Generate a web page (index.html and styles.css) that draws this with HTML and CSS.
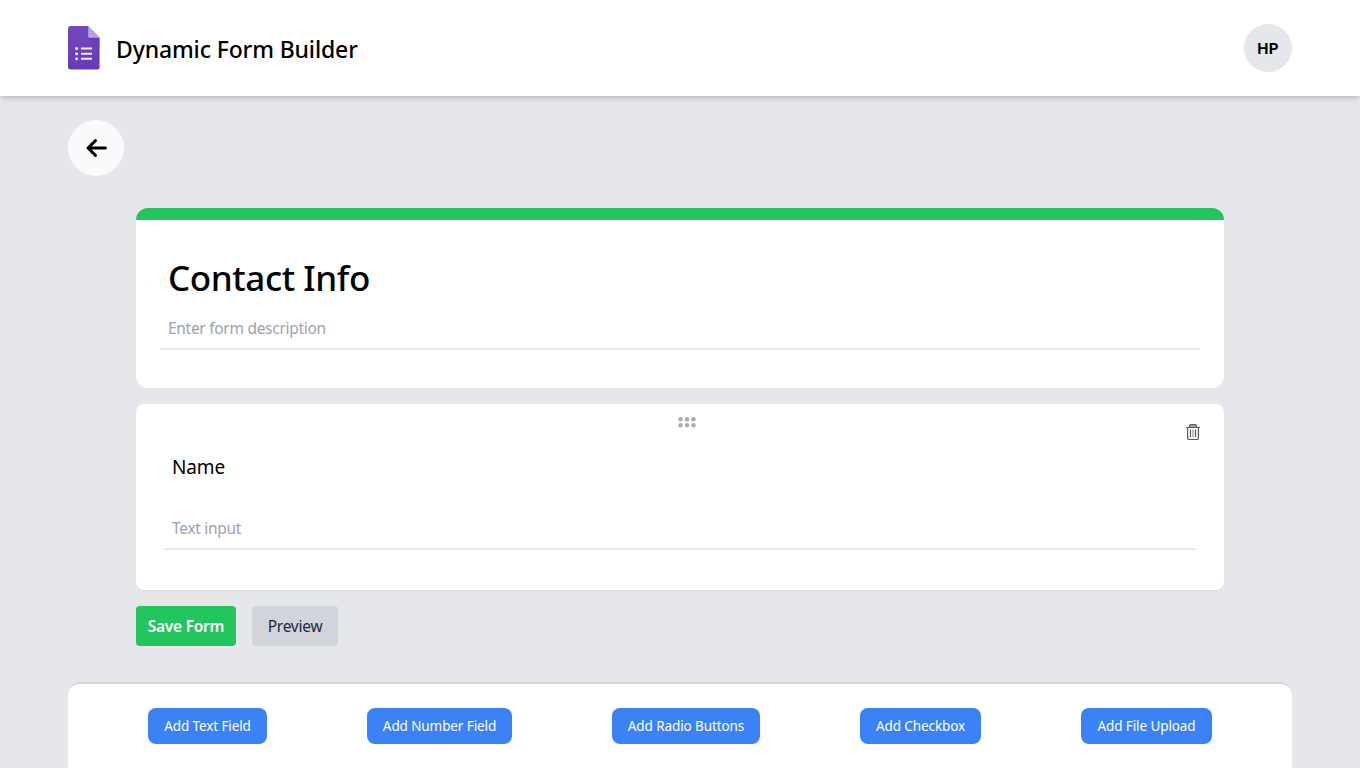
FILE: index.html
```html
<!DOCTYPE html>
<html lang="en">
<head>
<meta charset="utf-8">
<title>Dynamic Form Builder</title>
<link rel="stylesheet" href="styles.css">
</head>
<body>
<div class="page">
  <header class="header">
    <div class="brand">
      <svg class="logo" width="32" height="44" viewBox="0 0 32 44">
        <defs><linearGradient id="paper" x1="0" y1="0" x2="0" y2="1"><stop offset="0" stop-color="#7549bd"/><stop offset="1" stop-color="#673ab7"/></linearGradient></defs>
        <path fill="url(#paper)" d="M2.500 0H20.200L31.600 11.800V40.900a2.500 2.500 0 0 1-2.500 2.500H2.500a2.500 2.500 0 0 1-2.500-2.500V2.500a2.500 2.500 0 0 1 2.500-2.500z"/>
        <path fill="#5b34a3" opacity=".35" d="M21 11.800H31.600V22z"/>
        <path fill="#b9a3df" d="M20.200 0L31.600 11.800H21.200a1 1 0 0 1-1-1z"/>
        <g fill="#f1ebfa"><circle cx="8.600" cy="22.600" r="1.500"/><circle cx="8.600" cy="27.700" r="1.500"/><circle cx="8.600" cy="32.700" r="1.500"/><path d="M13 21.600h11v2H13zM13 26.700h11v2H13zM13 31.700h11v2H13z"/></g>
      </svg>
      <span class="brand-name">Dynamic Form Builder</span>
    </div>
    <div class="avatar">HP</div>
  </header>
  <main class="content">
    <button class="back" aria-label="Back">
      <svg width="24" height="24" viewBox="0 0 24 24" fill="none" stroke="#000" stroke-width="2.900" stroke-linecap="round" stroke-linejoin="round"><path d="M21.500 12H4M11.500 4.600L4 12l7.500 7.400"/></svg>
    </button>
    <div class="form">
      <section class="card title-card">
        <h1 class="form-title">Contact Info</h1>
        <div class="line-input"><span class="placeholder">Enter form description</span></div>
      </section>
      <section class="card field-card">
        <div class="field-tools">
          <svg class="drag" width="18" height="11" viewBox="0 0 18 11" fill="#acacac"><circle cx="2.500" cy="2.300" r="2.200"/><circle cx="9" cy="2.300" r="2.200"/><circle cx="15.500" cy="2.300" r="2.200"/><circle cx="2.500" cy="8.300" r="2.200"/><circle cx="9" cy="8.300" r="2.200"/><circle cx="15.500" cy="8.300" r="2.200"/></svg>
          <svg class="trash" width="16" height="18" viewBox="0 0 16 18" fill="none" stroke="#5c5c5c" stroke-width="1.200"><path fill="#aaa" d="M4.500 4V3a1.500 1.500 0 0 1 1.500-1.300h4a1.500 1.500 0 0 1 1.500 1.300v1"/><path d="M1 4.500h14M2.600 4.500v10.700a1.300 1.300 0 0 0 1.300 1.300h8.200a1.300 1.300 0 0 0 1.300-1.300V4.500M5.500 6.500v7.500M10.500 6.500v7.500"/><path stroke="#999" d="M8 6.500v7.500"/></svg>
        </div>
        <div class="field-name"><span>Name</span></div>
        <div class="line-input"><span class="placeholder">Text input</span></div>
      </section>
      <div class="actions">
        <button class="action save">Save Form</button>
        <button class="action preview">Preview</button>
      </div>
    </div>
  </main>
  <footer class="toolbar">
    <button class="add add-text">Add Text Field</button>
    <button class="add add-number">Add Number Field</button>
    <button class="add add-radio">Add Radio Buttons</button>
    <button class="add add-checkbox">Add Checkbox</button>
    <button class="add add-file">Add File Upload</button>
  </footer>
</div>
</body>
</html>
```
FILE: styles.css
```css
* { box-sizing: border-box; }
body { margin: 0; background: #e5e7eb; color: #000; font-family: "Noto Sans", "Open Sans", sans-serif; font-size: 15.5px; }
button { border: 0; padding: 0; font: inherit; white-space: nowrap; }
.page { height: 768px; overflow: hidden; display: flex; flex-direction: column; }
.header { height: 96px; flex: none; padding: 0 68px; display: flex; align-items: center; justify-content: space-between; background: #fff; box-shadow: 0 4px 6px -1px rgba(0,0,0,.1), 0 2px 4px -1px rgba(0,0,0,.12); }
.brand { display: flex; align-items: center; gap: 16px; }
.logo { display: block; }
.brand-name { font-size: 23px; font-weight: 500; line-height: 32px; padding-top: 1px; letter-spacing: -.14px; }
.avatar { width: 48px; height: 48px; border-radius: 50%; background: #e5e7eb; display: flex; align-items: center; justify-content: center; font-family: Inter, sans-serif; font-weight: 700; font-size: 15px; letter-spacing: .3px; }
.content { flex: 1; padding: 24px 68px 0; }
.back { width: 56px; height: 56px; border-radius: 50%; background: #f9fafb; display: flex; align-items: center; justify-content: center; }
.form { padding: 32px 68px 0; }
.card { background: #fff; }
.title-card { height: 180px; border-top: 12px solid #22c55e; border-radius: 12px; padding: 34px 24px 0; }
.form-title { margin: 0; padding-left: 8px; font-size: 35px; line-height: 48px; font-weight: 500; letter-spacing: -.42px; }
.line-input { height: 42px; border-bottom: 2px solid #e5e7eb; padding: 0 8px; line-height: 40px; }
.title-card .line-input { margin-top: 6px; }
.placeholder { color: #9ca3af; letter-spacing: -.29px; }
.field-card { height: 186px; margin-top: 16px; border-radius: 8px; padding: 12px 28px 0; box-shadow: 0 1px 2px rgba(0,0,0,.06); }
.field-tools { display: grid; grid-template-columns: 1fr 18px 1fr; height: 36px; padding-left: 14px; margin: 0 -5px; }
.drag { margin-top: 1px; grid-column: 2; }
.trash { margin-top: 7px; justify-self: end; }
.field-name { height: 56px; padding-left: 8px; font-size: 19px; line-height: 30px; letter-spacing: -.15px; }
.actions { display: flex; gap: 16px; margin-top: 16px; }
.action { height: 40px; border-radius: 4px; letter-spacing: -.25px; }
.save { width: 100px; color: #fff; background: #22c55e; font-weight: 600; }
.preview { width: 86px; color: #1f2937; background: #d1d5db; }
.toolbar { flex: none; height: 86px; margin: 0 68px; padding: 24px 80px 0; display: flex; justify-content: space-between; align-items: flex-start; background: #fff; border-top: 2px solid #d1d5db; border-radius: 12px 12px 0 0; }
.add { height: 36px; border-radius: 8px; background: #3b82f6; color: #fff; font-size: 13.5px; letter-spacing: -.1px; }
.add-text { width: 119px; }
.add-number { width: 145px; }
.add-radio { width: 148px; }
.add-checkbox { width: 121px; }
.add-file { width: 131px; }
```
